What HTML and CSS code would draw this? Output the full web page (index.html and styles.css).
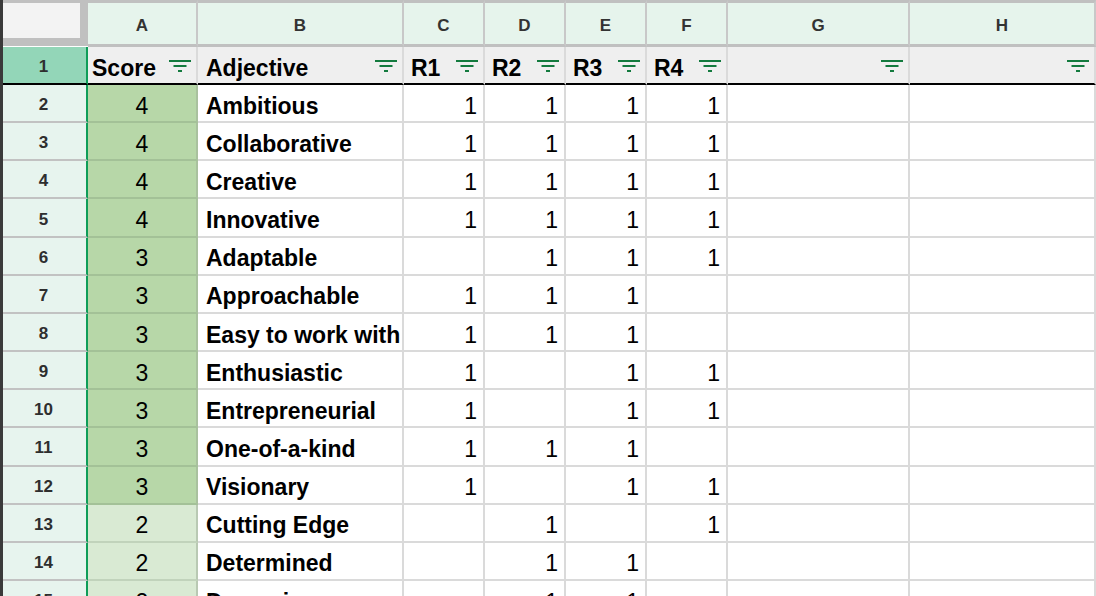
FILE: index.html
```html
<!DOCTYPE html>
<html>
<head>
  <title>Adjectives - Sheet1</title>
  <link rel="stylesheet" href="styles.css">
</head>
<body>
  <div class="frame">
    <div class="sheet" id="sheet">
      <div class="corner"><div class="corner-box"></div></div>
      <div class="col-head">A</div>
      <div class="col-head">B</div>
      <div class="col-head">C</div>
      <div class="col-head">D</div>
      <div class="col-head">E</div>
      <div class="col-head">F</div>
      <div class="col-head">G</div>
      <div class="col-head">H</div>
    </div>
  </div>

  <script>
    const sheet = document.getElementById('sheet');
    const filterIcon = '<svg class="filter" width="22" height="12" viewBox="0 0 22 12">' +
      '<rect x="0" y="0" width="22" height="2"/><rect x="4.5" y="5" width="13" height="2"/>' +
      '<rect x="9" y="10" width="4" height="2"/></svg>';

    const headers = ['Score', 'Adjective', 'R1', 'R2', 'R3', 'R4', '', ''];

    // score, adjective, r1..r4
    const rows = [
      [4, 'Ambitious', 1, 1, 1, 1],
      [4, 'Collaborative', 1, 1, 1, 1],
      [4, 'Creative', 1, 1, 1, 1],
      [4, 'Innovative', 1, 1, 1, 1],
      [3, 'Adaptable', '', 1, 1, 1],
      [3, 'Approachable', 1, 1, 1, ''],
      [3, 'Easy to work with', 1, 1, 1, ''],
      [3, 'Enthusiastic', 1, '', 1, 1],
      [3, 'Entrepreneurial', 1, '', 1, 1],
      [3, 'One-of-a-kind', 1, 1, 1, ''],
      [3, 'Visionary', 1, '', 1, 1],
      [2, 'Cutting Edge', '', 1, '', 1],
      [2, 'Determined', '', 1, 1, ''],
      [2, 'Dynamic', '', 1, 1, '']
    ];

    function cell(cls, html) {
      const div = document.createElement('div');
      div.className = cls;
      div.innerHTML = html;
      sheet.appendChild(div);
    }

    // header row (row 1)
    cell('row-head row-head-active', '1');
    headers.forEach((h, i) => {
      let cls = 'cell title';
      if (i === 0) cls += ' col-a';
      if (i === 1) cls += ' text';
      cell(cls, '<span>' + h + '</span>' + filterIcon);
    });

    rows.forEach((r, idx) => {
      cell('row-head', String(idx + 2));
      cell('cell col-a ' + (r[0] >= 3 ? 'score-high' : 'score-mid'), r[0]);
      cell('cell text', r[1]);
      for (let i = 2; i < 6; i++) {
        cell('cell num', r[i]);
      }
      cell('cell', '');
      cell('cell', '');
    });
  </script>
</body>
</html>
```

FILE: styles.css
```css
body {
  margin: 0;
  padding: 0;
  background-color: #ffffff;
  font-family: 'Liberation Sans', Arial, sans-serif;
  overflow: hidden;
}

.frame {
  height: 596px;
  border-left: 3px solid #3a3a3a;
  box-sizing: border-box;
}

.sheet {
  display: grid;
  grid-template-columns: 85px 110px 206px 81px 81px 81px 81px 182px 1fr;
  grid-template-rows: 47px 38px;
  grid-auto-rows: 38.17px;
}

.corner {
  background-color: #c0c0c0;
  border-bottom: 1px solid #ffffff;
  box-sizing: border-box;
  padding-top: 3px;
}

.corner-box {
  width: 77px;
  height: 35px;
  background-color: #f3f3f3;
}

.col-head {
  display: flex;
  justify-content: center;
  align-items: center;
  padding-top: 4px;
  background-color: #e6f4ec;
  border-top: 3px solid #c0c0c0;
  border-right: 2px solid #c8c8c8;
  border-bottom: 3px solid #c0c0c0;
  box-sizing: border-box;
  font-weight: bold;
  font-size: 17px;
  color: #333333;
}

.row-head {
  display: flex;
  justify-content: center;
  align-items: center;
  padding: 4px 2px 0 0;
  background-color: #e7f4ee;
  border-bottom: 2px solid #c2c2c2;
  border-right: 2px solid #0f9d58;
  box-sizing: border-box;
  font-weight: bold;
  font-size: 17px;
  color: #2e2e2e;
}

.row-head-active {
  background-color: #93d6b8;
  border-bottom: 2px solid #000000;
}

.cell {
  display: flex;
  align-items: center;
  border-right: 2px solid #dadada;
  border-bottom: 2px solid #dadada;
  box-sizing: border-box;
  padding: 6px 6px 0 6px;
  font-size: 23px;
  color: #000000;
  white-space: nowrap;
  overflow: hidden;
}

.title {
  justify-content: space-between;
  background-color: #efefef;
  border-bottom: 2px solid #000000;
  font-weight: bold;
  padding: 6px 5px 0 7px;
}

.title.col-a {
  padding-left: 4px;
}

.filter {
  fill: #137a3e;
  flex-shrink: 0;
  margin-top: -5px;
}

.text {
  font-weight: bold;
  padding-left: 8px;
}

.num {
  justify-content: flex-end;
}

.score-high,
.score-mid {
  justify-content: center;
}

.score-high {
  background-color: #b7d7a8;
  border-bottom-color: #a3c197;
  border-right-color: #a9c19e;
}

.score-mid {
  background-color: #d9ead3;
  border-bottom-color: #c1d3bb;
  border-right-color: #b9c9b3;
}
```
